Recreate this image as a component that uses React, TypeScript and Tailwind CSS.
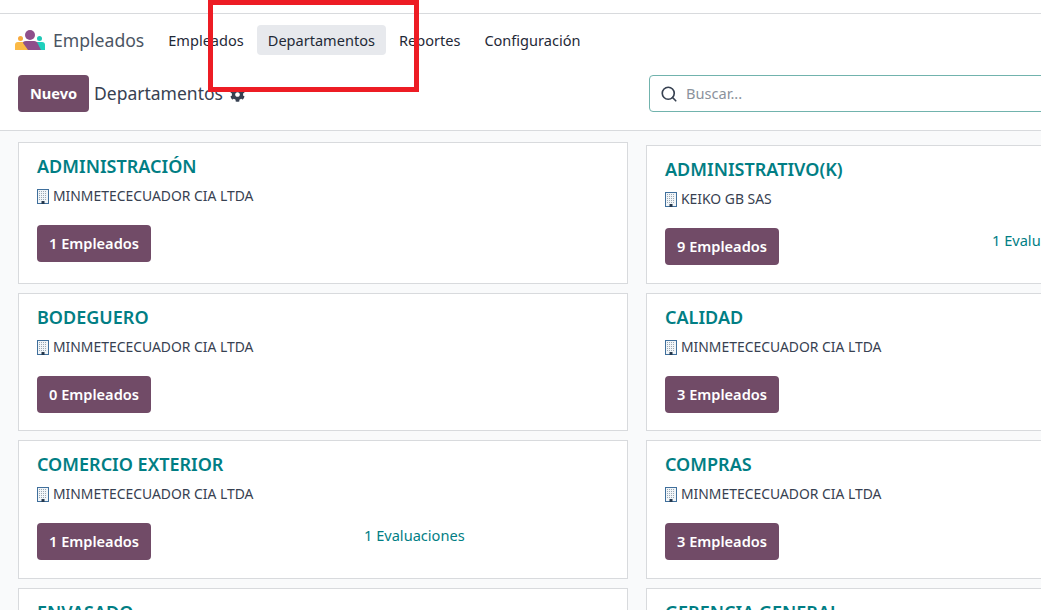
import { FaCog } from 'react-icons/fa'
import { LuSearch } from 'react-icons/lu'

const Logo = () => (
  <svg width="30" height="22" viewBox="0 0 30 22" className="block">
    <circle cx="15" cy="6" r="5" fill="#8f4f8b" />
    <circle cx="5.5" cy="9.5" r="2.5" fill="#f8a93c" />
    <circle cx="24.5" cy="9.5" r="2.5" fill="#1fc7b6" />
    <path d="M0 21 V16 Q0 13 3 13 H10 L16 21 Z" fill="#fbb945" />
    <path d="M30 21 V16 Q30 13 27 13 H20 L14 21 Z" fill="#1fd0bc" />
    <path d="M8 14 Q8 12 11 12 H19 Q22 12 23 15 L26 21 H13 Z" fill="#8f4f8b" />
  </svg>
)

const BuildingIcon = () => (
  <svg width="12" height="15" viewBox="0 0 12 15" className="block shrink-0">
    <rect x="0.5" y="0.5" width="11" height="14" fill="#f1f5f8" stroke="#3f6f9c" />
    <path d="M2 2.5H10M2 4.5H10M2 6.5H10M2 8.5H10M2 10.5H10" stroke="#9aa8b4" strokeDasharray="1 1" />
    <rect x="4.5" y="12" width="3" height="3" fill="#24384d" />
  </svg>
)

type Dept = {
  name: string
  company: string
  staff: number
  reviews?: number
  className?: string
}

const rows: Dept[] = [
  { name: 'ADMINISTRACIÓN', company: 'MINMETECECUADOR CIA LTDA', staff: 1 },
  { name: 'ADMINISTRATIVO(K)', company: 'KEIKO GB SAS', staff: 9, reviews: 1, className: 'mt-[3px]' },
  { name: 'BODEGUERO', company: 'MINMETECECUADOR CIA LTDA', staff: 0 },
  { name: 'CALIDAD', company: 'MINMETECECUADOR CIA LTDA', staff: 3 },
  { name: 'COMERCIO EXTERIOR', company: 'MINMETECECUADOR CIA LTDA', staff: 1, reviews: 1 },
  { name: 'COMPRAS', company: 'MINMETECECUADOR CIA LTDA', staff: 3 },
  { name: 'ENVASADO', company: 'MINMETECECUADOR CIA LTDA', staff: 1 },
  { name: 'GERENCIA GENERAL', company: 'MINMETECECUADOR CIA LTDA', staff: 1 },
]

const DeptCard = ({ name, company, staff, reviews, className }: Dept) => (
  <div className={`bg-white border border-[#d8dadd] pl-[18px] pt-[11px] ${className ?? ''}`}>
    <div className="text-[18px] leading-[24px] font-semibold text-[#017e84]">{name}</div>
    <div className="mt-2 flex items-center gap-[4px] h-5 text-[13.9px] leading-5 text-[#374151]">
      <BuildingIcon />
      <span>{company}</span>
    </div>
    <div className="mt-[19px] grid grid-cols-[327px_1fr]">
      <div>
        <button className="h-[37px] px-3 rounded bg-[#714b67] text-white text-[14.6px] font-semibold">
          {staff} Empleados
        </button>
      </div>
      {reviews ? (
        <div className="mt-[2px] text-[14.6px] leading-5 text-[#017e84] whitespace-nowrap">{reviews} Evaluaciones</div>
      ) : null}
    </div>
  </div>
)

export default function App() {
  return (
    <div className="relative w-[1041px] h-[610px] overflow-hidden bg-[#f9fafb] font-['Noto_Sans',sans-serif] text-[#374151]">
      <header className="bg-white">
        <div className="h-[14px] border-b border-[#d8dadd]" />
        <nav className="h-[50px] pt-[11px] pl-[15px] flex items-start">
          <div className="h-[30px] flex items-center">
            <Logo />
            <span className="ml-2 text-[17.6px] text-[#4b5563]">Empleados</span>
          </div>
          <div className="ml-[13px] flex items-center h-[30px] leading-[30px] text-[14.55px] text-[#1f2937]">
            <span className="px-[11px]">Empleados</span>
            <span className="ml-[2px] px-[11px] rounded bg-[#e7e9ed]">Departamentos</span>
            <span className="ml-[2px] px-[11px]">Reportes</span>
            <span className="ml-[2px] px-[11px]">Configuración</span>
          </div>
        </nav>
        <div className="h-[67px] border-b border-[#d8dadd] pl-[18px] pt-[11px] flex items-start">
          <button className="h-[37px] w-[71px] shrink-0 rounded bg-[#714b67] text-white text-[14.6px] font-bold">Nuevo</button>
          <span className="ml-[5px] w-[128px] shrink-0 h-[37px] leading-[37px] text-[17.5px] text-[#374151] whitespace-nowrap">Departamentos</span>
          <FaCog className="ml-2 mt-[12px] w-[15px] h-[15px] shrink-0 text-[#374151]" />
          <div className="ml-[404px] w-[500px] shrink-0 h-[37px] rounded border border-[#71b3ad] bg-white flex items-center pl-[10px]">
            <LuSearch className="w-[18px] h-[18px] text-[#374151]" strokeWidth={2.2} />
            <span className="ml-2 text-[14.6px] text-[#8b929c]">Buscar...</span>
          </div>
        </div>
      </header>
      <main className="pt-[11px] pl-[18px] grid grid-cols-[610px_610px] grid-rows-[142px_138px_139px_139px] gap-x-[18px] gap-y-[9px]">
        {rows.map((dept) => (
          <DeptCard key={dept.name} {...dept} />
        ))}
      </main>
      {/* marca roja encima de la captura */}
      <div className="absolute left-[208px] top-0 w-[211px] h-[92px] border-[5px] border-[#ed1c24]" />
    </div>
  )
}
